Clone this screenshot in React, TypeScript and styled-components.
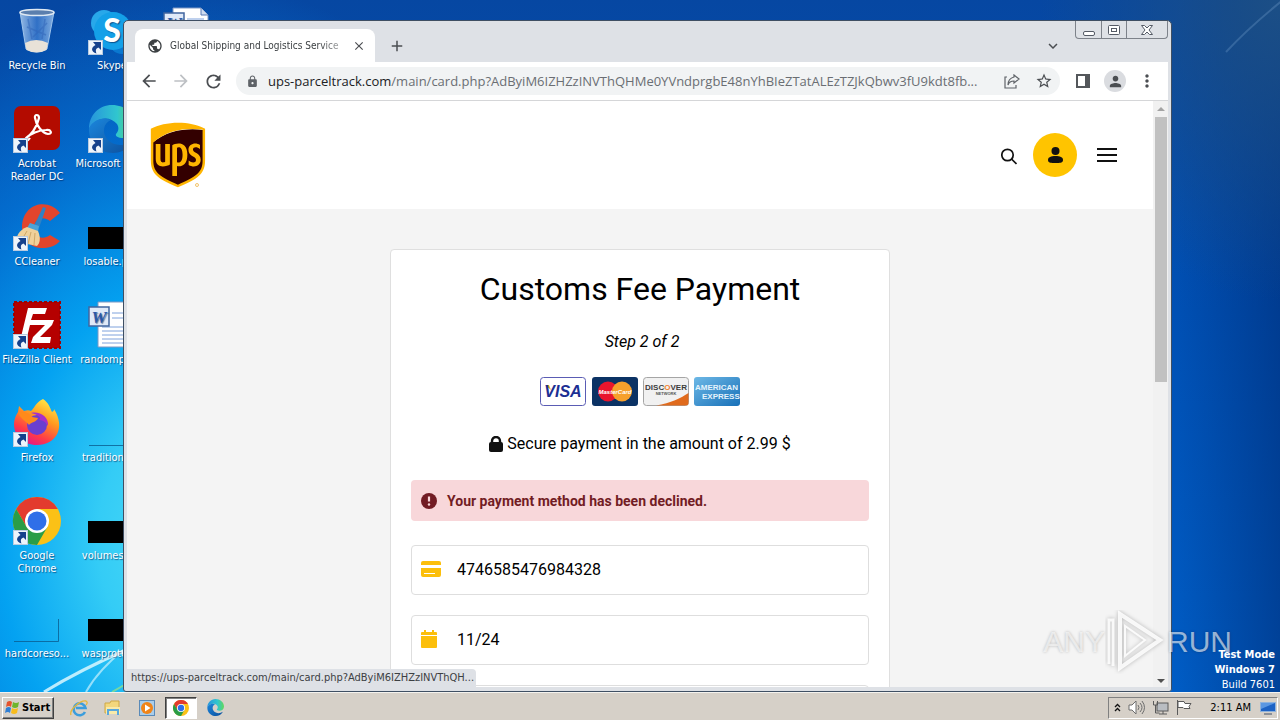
import React from "react";
import styled, { createGlobalStyle, css } from "styled-components";
import {
  MdAdd, MdArrowBack, MdArrowForward, MdClose, MdLock, MdMoreVert, MdPerson,
  MdPublic, MdRefresh, MdStarBorder, MdKeyboardArrowDown,
} from "react-icons/md";
import { FaUps } from "react-icons/fa";

const uiFont = '"DejaVu Sans Condensed", "DejaVu Sans", sans-serif';
const webFont = 'Roboto, "Liberation Sans", sans-serif';

const Global = createGlobalStyle`
  * { box-sizing: border-box; }
  body { margin: 0; overflow: hidden; font-family: ${uiFont}; }
  button { margin: 0; padding: 0; border: 0; background: none; font: inherit; color: inherit; }
`;

/* ---------- Desktop ---------- */

const Screen = styled.div`
  display: flex;
  flex-direction: column;
  height: 100vh;
`;

const Desktop = styled.main`
  position: relative;
  flex: 1;
  min-height: 0;
  overflow: hidden;
  background:
    radial-gradient(ellipse 420px 560px at 190px 540px, #4fdcf6 0%, #34ccf6 22%, rgba(4, 166, 244, 0.95) 45%, rgba(4, 130, 228, 0.6) 72%, rgba(4, 110, 215, 0) 100%),
    radial-gradient(ellipse 240px 300px at 100% 0, #1c4f86 0%, rgba(22, 76, 134, 0) 100%),
    linear-gradient(90deg, rgba(0, 30, 90, 0) 92%, rgba(0, 40, 110, 0.5) 100%),
    linear-gradient(180deg, #0647a2 0%, #0050b4 45%, #005cc4 100%);
`;

const Rays = styled.svg`
  position: absolute;
  width: 140px;
  height: 110px;
  left: 0;
  bottom: 0;
`;

const CornerRays = styled(Rays)`
  left: auto;
  bottom: auto;
  right: 0;
  top: 0;
`;

const IconGrid = styled.div`
  position: relative;
  display: grid;
  grid-auto-flow: column;
  grid-template-rows: repeat(7, 98px);
  grid-auto-columns: 74px;
  column-gap: 1px;
`;

const DesktopItem = styled.button`
  display: flex;
  flex-direction: column;
  align-items: center;
  justify-content: flex-start;
  gap: 4px;
  padding-top: 7px;
  color: #fff;
  font-size: 11px;
  line-height: 13px;
  white-space: pre;
  text-shadow: 1px 1px 1px rgba(0, 30, 80, 0.6);
  svg { display: block; overflow: visible; }
`;

const BuildInfo = styled.div`
  position: absolute;
  right: 5px;
  bottom: 0;
  color: #fff;
  font-size: 11px;
  line-height: 15px;
  text-align: right;
`;

const Watermark = styled.div`
  position: absolute;
  right: 48px;
  bottom: 18px;
  display: flex;
  align-items: center;
  pointer-events: none;
  color: rgba(255, 255, 255, 0.6);
  font-family: "Liberation Sans", sans-serif;
  font-size: 30px;
  line-height: 64px;
  text-shadow: 0 0 3px rgba(0, 0, 0, 0.25);
`;

/* ---------- Browser window ---------- */

const Window = styled.section`
  position: absolute;
  left: 123px;
  right: 108px;
  top: 20px;
  bottom: 0;
  display: flex;
  flex-direction: column;
  padding: 0 3px 4px;
  border: 1px solid #3f4f63;
  border-radius: 5px 5px 3px 3px;
  background: #dee1e6;
`;

const TabStrip = styled.div`
  display: flex;
  align-items: flex-end;
  height: 41px;
  padding-left: 8px;
  color: #3c4043;
`;

const Tab = styled.div`
  display: flex;
  align-items: center;
  width: 240px;
  height: 33px;
  padding: 0 8px 0 12px;
  border-radius: 8px 8px 0 0;
  background: #fff;
  font-size: 10px;
`;

const TabTitle = styled.span`
  flex: 1;
  margin: 0 6px 0 7px;
  overflow: hidden;
  white-space: nowrap;
  mask-image: linear-gradient(90deg, #000 85%, rgba(0, 0, 0, 0.3));
`;

const IconButton = styled.button<{ $w?: number; $dim?: boolean }>`
  display: flex;
  align-items: center;
  justify-content: center;
  flex: none;
  width: ${(p) => p.$w ?? 32}px;
  height: 32px;
  color: ${(p) => (p.$dim ? "#bdc0c4" : "#4b4e52")};
`;

const Spacer = styled.div`
  flex: 1;
`;

const WindowControls = styled.div`
  display: flex;
  align-self: flex-start;
  margin-left: 6px;
  border: 1px solid #7d828a;
  border-top: 0;
  border-radius: 0 0 4px 4px;
`;

const ControlButton = styled.button<{ $w: number }>`
  display: flex;
  align-items: center;
  justify-content: center;
  width: ${(p) => p.$w}px;
  height: 17px;
  & + & { border-left: 1px solid #7d828a; }
`;

const Toolbar = styled.div`
  display: flex;
  align-items: center;
  height: 39px;
  padding: 0 5px 0 6px;
  border-bottom: 1px solid #d5d6d8;
  background: #fff;
`;

const AddressBar = styled.div`
  display: flex;
  flex: 1;
  align-items: center;
  min-width: 0;
  height: 28px;
  margin: 0 7px;
  padding-left: 10px;
  border-radius: 14px;
  background: #f1f3f4;
  color: #5f6368;
`;

const Url = styled.span`
  flex: 1;
  min-width: 0;
  margin-left: 9px;
  overflow: hidden;
  color: #6a6e73;
  font-family: "Open Sans", "Noto Sans", sans-serif;
  font-size: 13px;
  white-space: nowrap;
  b { color: #202124; font-weight: 400; }
`;

const Avatar = styled.span`
  display: flex;
  align-items: center;
  justify-content: center;
  width: 22px;
  height: 22px;
  border-radius: 50%;
  background: #dadce0;
`;

const Viewport = styled.div`
  position: relative;
  display: flex;
  flex: 1;
  min-height: 0;
  overflow: hidden;
  background: #f4f4f4;
`;

const StatusBubble = styled.div`
  position: absolute;
  left: 0;
  bottom: 0;
  padding: 0 2px 0 4px;
  border-radius: 0 4px 0 0;
  background: #dee1e6;
  color: #3c4043;
  font-size: 11px;
  line-height: 18px;
`;

const ScrollTrack = styled.div`
  display: flex;
  flex-direction: column;
  align-items: center;
  width: 15px;
  padding: 6px 0 4px;
  gap: 6px;
  background: #f1f1f1;
`;

const ScrollThumb = styled.div`
  width: 12px;
  height: 46%;
  background: #c1c1c1;
`;

/* ---------- Web page ---------- */

const Page = styled.div`
  flex: 1;
  color: #000;
  font-family: ${webFont};
  font-size: 16px;
`;

const PageHeader = styled.header`
  display: flex;
  align-items: center;
  height: 108px;
  padding: 0 36px 0 23px;
  background: #fff;
`;

const HeaderButton = styled.button`
  display: flex;
  align-items: center;
  justify-content: center;
  margin-left: 16px;
  & + & + & { margin-left: 20px; }
`;

const AccountButton = styled(HeaderButton)`
  width: 44px;
  height: 44px;
  border-radius: 50%;
  background: #ffc400;
`;

const Card = styled.div`
  display: flex;
  flex-direction: column;
  max-width: 500px;
  margin: 40px auto;
  padding: 20px;
  border: 1px solid #dfdfdf;
  border-radius: 4px;
  background: #fff;
`;

const Title = styled.h1`
  margin: 0;
  font-size: 32px;
  font-weight: 400;
  line-height: 38px;
  text-align: center;
`;

const Step = styled.p`
  margin: 24px 0 25px;
  padding-left: 4px;
  font-style: italic;
  line-height: 20px;
  text-align: center;
`;

const CardLogos = styled.div`
  display: flex;
  justify-content: center;
  gap: 5px;
  svg { display: block; }
`;

const Secure = styled.p`
  display: flex;
  align-items: center;
  justify-content: center;
  gap: 4px;
  margin: 26px 0 25px;
  line-height: 22px;
`;

const Alert = styled.div`
  display: flex;
  align-items: center;
  gap: 10px;
  height: 41px;
  margin-bottom: 24px;
  padding: 0 10px;
  border-radius: 4px;
  background: #f8d7da;
  color: #721c24;
  font-size: 14px;
  font-weight: 700;
`;

const Field = styled.label`
  display: flex;
  align-items: center;
  height: 50px;
  margin-bottom: 20px;
  padding: 0 9px 2px;
  border: 1px solid #dedede;
  border-radius: 4px;
`;

const FieldIcon = styled.span`
  display: flex;
  width: 36px;
`;

const FieldInput = styled.input`
  flex: 1;
  min-width: 0;
  padding: 0;
  border: 0;
  outline: 0;
  background: none;
  color: #000;
  font-family: ${webFont};
  font-size: 16px;
`;

/* ---------- Taskbar ---------- */

const Taskbar = styled.footer`
  display: flex;
  align-items: center;
  height: 28px;
  padding: 2px 2px 0;
  border-top: 1px solid #f4f2ee;
  background: #d6d0c8;
`;

const bevel = css`
  border: 1px solid;
  border-color: #fff #404040 #404040 #fff;
  box-shadow: inset -1px -1px #808080;
`;

const StartButton = styled.button`
  display: flex;
  align-items: center;
  gap: 2px;
  width: 52px;
  height: 22px;
  margin-right: 8px;
  padding-left: 2px;
  font-size: 11px;
  font-weight: 700;
  ${bevel}
`;

const TaskButton = styled.button<{ $active?: boolean }>`
  display: flex;
  align-items: center;
  justify-content: center;
  width: 32px;
  height: 22px;
  margin: 0 1px;
  ${(p) => p.$active && css`
    background: #fff;
    border: 1px solid;
    border-color: #404040 #fff #fff #404040;
    box-shadow: inset 1px 1px #808080;
  `}
`;

const Tray = styled.div`
  display: flex;
  align-items: center;
  gap: 7px;
  height: 22px;
  padding: 0 1px 0 5px;
  border: 1px solid;
  border-color: #808080 #fff #fff #808080;
  svg { display: block; }
`;

const Clock = styled.time`
  margin: 0 2px 0 10px;
  font-size: 11px;
`;

/* ---------- Drawings ---------- */

const Shortcut = () => (
  <g transform="translate(0 33)">
    <rect x=".5" y=".5" width="14" height="14" fill="#eef4fb" stroke="#b9cbe0" />
    <path d="M5 2h8v8l-2.500-2.500c-3 1-3 3-2 6-6-2-5.500-6-1-8.500z" fill="#16418c" />
  </g>
);

const BinIcon = () => (
  <svg width="48" height="48" viewBox="0 0 48 48">
    <defs>
      <linearGradient id="bin" x1="0" x2="1">
        <stop offset="0" stopColor="#c9e2fa" stopOpacity=".75" />
        <stop offset=".5" stopColor="#4d8bdc" stopOpacity=".6" />
        <stop offset="1" stopColor="#b8d8f8" stopOpacity=".7" />
      </linearGradient>
    </defs>
    <path d="M7 5l6 37q11 6 21 0l7-37z" fill="url(#bin)" stroke="#9cc3ec" />
    <path d="M12 36q11-6 23 0l-1.500 7q-10 5-20 0z" fill="#e8e2d8" />
    <path d="M15 12l4 20M32 12l-3 20M14 20l19 8M34 16L20 30" stroke="#2f63b8" strokeWidth="1.500" opacity=".5" fill="none" />
    <ellipse cx="24" cy="5.500" rx="17" ry="3" fill="#5b7fae" stroke="#dfe9f3" strokeWidth="1.500" />
  </svg>
);

const SkypeIcon = () => (
  <svg width="48" height="48" viewBox="0 0 48 48">
    <circle cx="16" cy="16" r="13" fill="#28a8ea" />
    <circle cx="34" cy="34" r="13" fill="#0a78d0" />
    <circle cx="25" cy="24" r="19" fill="#14a0e8" />
    <text x="24" y="35" fontSize="32" fontWeight="900" fill="#fff" textAnchor="middle" fontFamily="Lato, sans-serif">S</text>
    <Shortcut />
  </svg>
);

const AcrobatIcon = () => (
  <svg width="48" height="48" viewBox="0 0 48 48">
    <rect x="1" y="1" width="46" height="44" rx="7" fill="#b30b00" />
    <path d="M13 33c4-2 11-10 13-20 0-4-5-4-4 0 1 7 7 15 13 16 5 0 3-5-2-4-7 0-16 4-20 8-2 4 2 3 4 0" fill="none" stroke="#fff" strokeWidth="2.200" />
    <Shortcut />
  </svg>
);

const EdgeMark = ({ size }: { size: number }) => (
  <svg width={size} height={size} viewBox="0 0 48 48">
    <defs>
      <linearGradient id="edgeTop" x1="0" x2="1">
        <stop offset="0" stopColor="#2794dc" />
        <stop offset=".6" stopColor="#30c6cf" />
        <stop offset="1" stopColor="#62d85a" />
      </linearGradient>
      <linearGradient id="edgeLow" x1="0" y1="0" x2="1" y2="1">
        <stop offset="0" stopColor="#1b86dc" />
        <stop offset="1" stopColor="#0c4f9c" />
      </linearGradient>
    </defs>
    <path d="M1 24C1 10 11 0 24 0s24 9 24 21c0 8-6 12-13 12-5 0-8-2-7-4 3-3 3-7 1-10C22 10 7 12 1 24z" fill="url(#edgeTop)" />
    <path d="M1 23c4-8 14-12 22-8-8 3-9 13-4 19 6 7 17 8 26 2-4 8-12 12-20 12C11 48 0 37 1 23z" fill="url(#edgeLow)" />
  </svg>
);

const EdgeIcon = () => (
  <svg width="48" height="48" viewBox="0 0 48 48">
    <EdgeMark size={48} />
    <Shortcut />
  </svg>
);

const CCleanerIcon = () => (
  <svg width="48" height="48" viewBox="0 0 48 48">
    <path d="M47 10l-10 8c-8-6-16-1-16 7s8 13 16 7l10 6C38 49 10 49 9 25 9-1 36-5 47 10z" fill="#e2452c" />
    <path d="M30 4l3 1-7 20-5-2z" fill="#2f82c4" />
    <path d="M17 20l9 3-1 6-11-4z" fill="#4aa3d8" />
    <path d="M14 24l11 4c3 7 2 12-1 15L5 39C2 34 6 27 14 24z" fill="#f0d19a" />
    <path d="M14 28l-6 10M18 29l-3 12M22 30l-1 12" stroke="#cfa766" />
    <Shortcut />
  </svg>
);

const FileZillaIcon = () => (
  <svg width="48" height="48" viewBox="0 0 48 48">
    <rect x="1" y="1" width="46" height="46" fill="#b50000" stroke="#a00000" strokeWidth="2" strokeDasharray="3 2" />
    <path d="M15 7h19l-2 6H20l-2 6h10l-1 5H17l-3 12H8z" fill="#fff" />
    <path d="M25 19h16l-2 5-12 12h11l-1 6H18l2-6 12-12h-9z" fill="#fff" />
    <Shortcut />
  </svg>
);

const DocIcon = () => (
  <svg width="48" height="48" viewBox="0 0 48 48">
    <path d="M10 1h28l7 7v38H10z" fill="#fff" stroke="#7c98c4" />
    <path d="M38 1v7h7" fill="#cfdcf0" stroke="#5a7bb4" />
    <path d="M24 12h17M24 17h17M14 26h28M14 30h28M14 34h28M14 38h28M14 42h28" stroke="#7ea2dc" />
    <rect x="1" y="6" width="20" height="19" fill="#dfe9f8" stroke="#41659f" strokeWidth="1.500" />
    <text x="11" y="22" fontSize="17" fontWeight="700" fontStyle="italic" fill="#2a58a8" textAnchor="middle" fontFamily="Liberation Serif, serif">W</text>
  </svg>
);

const FirefoxIcon = () => (
  <svg width="48" height="48" viewBox="0 0 48 48">
    <defs>
      <linearGradient id="fox" x1=".8" y1="0" x2=".3" y2="1">
        <stop offset="0" stopColor="#fff04a" />
        <stop offset=".4" stopColor="#ff9a1f" />
        <stop offset=".75" stopColor="#ff3b47" />
        <stop offset="1" stopColor="#e3148c" />
      </linearGradient>
    </defs>
    <path d="M30 0c6 4 7 9 9 13 2-1 2-2 2-3 12 19 2 36-17 36C10 46 1 37 1 25c0-5 2-9 4-12l1-6 5 5c3-1 5-1 7 0 3-2 4-8 12-12z" fill="url(#fox)" />
    <circle cx="24" cy="26" r="10" fill="#6a3fd0" />
    <path d="M18 14c9-2 18 4 17 13-2-4-5-6-9-6 4-3-4-6-8-7z" fill="#a82fc8" />
    <path d="M5 14c5-3 11 0 14 4l6 1c-1 4-7 4-9 7-2-3-8-6-11-12z" fill="#ff8a1a" />
    <Shortcut />
  </svg>
);

const ChromeMark = ({ size }: { size: number }) => (
  <svg width={size} height={size} viewBox="0 0 48 48">
    <circle cx="24" cy="24" r="24" fill="#fbc116" />
    <path d="M24 12h20.800A24 24 0 0 0 3.200 12l10.400 18z" fill="#e33b2e" />
    <path d="M3.200 12A24 24 0 0 0 24 48l10.400-18-20.800 0z" fill="#2a9d47" />
    <circle cx="24" cy="24" r="12" fill="#fff" />
    <circle cx="24" cy="24" r="9.500" fill="#2f6fe8" />
  </svg>
);

const ChromeIcon = () => (
  <svg width="48" height="48" viewBox="0 0 48 48">
    <ChromeMark size={48} />
    <Shortcut />
  </svg>
);

const BlackThumb = () => (
  <svg width="48" height="48" viewBox="0 0 48 48">
    <rect y="24" width="46" height="22" fill="#000" />
  </svg>
);

const ClearThumb = () => (
  <svg width="48" height="48" viewBox="0 0 48 48">
    <path d="M1 46.500h44.500V24" fill="none" stroke="#0a5c90" opacity=".8" />
  </svg>
);

const WindowsFlag = () => (
  <svg width="15" height="15" viewBox="0 0 15 15">
    <path d="M2 2q3-2 5 0L6 7Q4 5 1 7z" fill="#e5532c" />
    <path d="M8 2q3 2 6 0l-1 5q-3 2-6 0z" fill="#6fb52c" />
    <path d="M1 8q3-2 5 0l-1 5q-2-2-5 0z" fill="#2f7fd4" />
    <path d="M7 8q3 2 6 0l-1 5q-3 2-6 0z" fill="#f8bc1c" />
  </svg>
);

const IeIcon = () => (
  <svg width="18" height="18" viewBox="0 0 18 18">
    <path d="M15 12a6 6 0 1 1 .5-4H6" transform="translate(0 1)" fill="none" stroke="#3b9ddc" strokeWidth="2.600" />
    <path d="M1 16C-1 11 10 1 16 2c2 1 1 3 0 4" fill="none" stroke="#e6b73a" strokeWidth="1.300" />
  </svg>
);

const FolderIcon = () => (
  <svg width="18" height="18" viewBox="0 0 18 18">
    <path d="M1 4h5l1-2h8v12H1z" fill="#f3d77c" stroke="#cfa946" />
    <path d="M2 8h14v7H2z" fill="#f9eaa9" />
    <path d="M4 16v-5h10v5" fill="none" stroke="#5aa8dc" strokeWidth="2" />
  </svg>
);

const PlayerIcon = () => (
  <svg width="16" height="16" viewBox="0 0 16 16">
    <rect x=".5" y=".5" width="15" height="15" fill="#a9cdea" stroke="#5a8ab8" />
    <circle cx="8" cy="8" r="6" fill="#f08418" />
    <path d="M6 4.500L11.500 8 6 11.500z" fill="#fff" />
  </svg>
);

const UpsLogo = () => (
  <svg width="56" height="68" viewBox="0 0 56 68" role="img" aria-label="UPS">
    <path d="M2 22C18 9 36 7 54 9v31c0 13-8 18-26 25C10 58 2 53 2 40z" fill="#330000" />
    <FaUps x="-9" y="-3" size={74} color="#ffb500" />
    <circle cx="47" cy="64" r="1.500" fill="none" stroke="#f3c46a" />
  </svg>
);

const cardText = { fontFamily: "Liberation Sans, sans-serif", fontWeight: 700 };

const PaymentLogos = () => (
  <CardLogos>
    <svg width="46" height="30" viewBox="0 0 46 30">
      <rect x=".5" y=".5" width="45" height="28" rx="3" fill="#fff" stroke="#5a5cb4" />
      <path d="M5 8h4l2 5z" fill="#f2ae2e" />
      <text x="23" y="20" fontSize="16" fontStyle="italic" textAnchor="middle" fill="#1c2f93" {...cardText}>VISA</text>
    </svg>
    <svg width="47" height="30" viewBox="0 0 47 30">
      <rect x="1" width="46" height="29" rx="3" fill="#0b3264" />
      <circle cx="17" cy="14.500" r="10" fill="#e8152c" />
      <circle cx="31" cy="14.500" r="10" fill="#f6a02c" />
      <text x="24" y="17" fontSize="6" fontStyle="italic" textAnchor="middle" fill="#fff" {...cardText}>MasterCard</text>
    </svg>
    <svg width="46" height="30" viewBox="0 0 46 30">
      <rect x=".5" y=".5" width="45" height="28" rx="3" fill="#f1f1f1" stroke="#a5a5a5" />
      <path d="M13 28.500C28 26 38 21 45.500 16v10q0 2.500-3 2.500z" fill="#e06a1c" />
      <text x="23" y="13" fontSize="8" textAnchor="middle" fill="#3c3c3c" {...cardText}>DISC<tspan fill="#f08030">O</tspan>VER</text>
      <text x="23" y="18" fontSize="4" textAnchor="middle" fill="#555" {...cardText}>NETWORK</text>
    </svg>
    <svg width="46" height="30" viewBox="0 0 46 30">
      <defs>
        <linearGradient id="amex" x1="0" y1="0" x2="1" y2="1">
          <stop offset="0" stopColor="#6db8e6" />
          <stop offset="1" stopColor="#1870b8" />
        </linearGradient>
      </defs>
      <rect width="46" height="29" rx="3" fill="url(#amex)" />
      <text x="1" y="13" fontSize="8" fill="#e4f3fc" {...cardText}>AMERICAN</text>
      <text x="8" y="22" fontSize="8" fill="#e4f3fc" {...cardText}>EXPRESS</text>
    </svg>
  </CardLogos>
);

const desktopItems: { label: string; icon: React.ReactNode }[] = [
  { label: "Recycle Bin", icon: <BinIcon /> },
  { label: "Acrobat\nReader DC", icon: <AcrobatIcon /> },
  { label: "CCleaner", icon: <CCleanerIcon /> },
  { label: "FileZilla Client", icon: <FileZillaIcon /> },
  { label: "Firefox", icon: <FirefoxIcon /> },
  { label: "Google\nChrome", icon: <ChromeIcon /> },
  { label: "hardcoreso...", icon: <ClearThumb /> },
  { label: "Skype", icon: <SkypeIcon /> },
  { label: "Microsoft Edge", icon: <EdgeIcon /> },
  { label: "losable.png", icon: <BlackThumb /> },
  { label: "randompur...", icon: <DocIcon /> },
  { label: "traditional...", icon: <ClearThumb /> },
  { label: "volumeser...", icon: <BlackThumb /> },
  { label: "wasprotea...", icon: <BlackThumb /> },
  { label: "", icon: <DocIcon /> },
];

const Browser = () => (
  <Window aria-label="Browser">
    <TabStrip>
      <Tab>
        <MdPublic size={16} />
        <TabTitle>Global Shipping and Logistics Service</TabTitle>
        <IconButton $w={16} aria-label="Close tab"><MdClose size={14} stroke="currentColor" /></IconButton>
      </Tab>
      <IconButton $w={44} aria-label="New tab"><MdAdd size={18} stroke="currentColor" /></IconButton>
      <Spacer />
      <IconButton aria-label="Search tabs"><MdKeyboardArrowDown size={18} stroke="currentColor" /></IconButton>
      <WindowControls>
        <ControlButton $w={25} aria-label="Minimize">
          <svg width="12" height="12" viewBox="0 0 12 12"><rect x=".5" y="7.500" width="11" height="4" rx="1.500" fill="#fff" stroke="#555b66" /></svg>
        </ControlButton>
        <ControlButton $w={25} aria-label="Maximize">
          <svg width="12" height="10" viewBox="0 0 12 10"><rect x=".5" y=".5" width="11" height="9" rx="1" fill="#fff" stroke="#555b66" /><rect x="3.500" y="3.500" width="5" height="3" fill="#fff" stroke="#555b66" /></svg>
        </ControlButton>
        <ControlButton $w={41} aria-label="Close">
          <svg width="12" height="10" viewBox="0 0 12 10"><path d="M.5.500h3L6 3 8.500.500h3L8 5l3.500 4.500h-3L6 7 3.500 9.500h-3L4 5z" fill="#fff" stroke="#555b66" /></svg>
        </ControlButton>
      </WindowControls>
    </TabStrip>
    <Toolbar>
      <IconButton aria-label="Back"><MdArrowBack size={20} /></IconButton>
      <IconButton $dim aria-label="Forward"><MdArrowForward size={20} /></IconButton>
      <IconButton aria-label="Reload"><MdRefresh size={21} /></IconButton>
      <AddressBar>
        <MdLock size={13} />
        <Url><b>ups-parceltrack.com</b>/main/card.php?AdByiM6IZHZzINVThQHMe0YVndprgbE48nYhBIeZTatALEzTZJkQbwv3fU9kdt8fb...</Url>
        <IconButton aria-label="Share">
          <svg width="16" height="15" viewBox="0 0 16 15" fill="none" stroke="#5f6368" strokeWidth="1.200">
            <path d="M3 3H1v11h11v-3" />
            <path d="M10 1l5 4-5 4V7C7 7 5 8 4 11c0-4 2-7 6-8z" />
          </svg>
        </IconButton>
        <IconButton aria-label="Bookmark"><MdStarBorder size={18} /></IconButton>
      </AddressBar>
      <IconButton aria-label="Side panel">
        <svg width="14" height="14" viewBox="0 0 14 14"><rect x="1" y="1" width="12" height="12" fill="none" stroke="#54575b" strokeWidth="2" /><path d="M9 1h4v12H9z" fill="#54575b" /></svg>
      </IconButton>
      <IconButton aria-label="Profile"><Avatar><MdPerson size={17} /></Avatar></IconButton>
      <IconButton aria-label="Menu"><MdMoreVert size={20} /></IconButton>
    </Toolbar>
    <Viewport>
      <Page>
        <PageHeader>
          <UpsLogo />
          <Spacer />
          <HeaderButton aria-label="Search">
            <svg width="16" height="20" viewBox="0 0 16 20" fill="none" stroke="#111" strokeWidth="1.700"><circle cx="6.500" cy="10" r="5.700" /><path d="M10.500 14l5 5" /></svg>
          </HeaderButton>
          <AccountButton aria-label="Account">
            <svg width="15" height="16" viewBox="0 0 15 16" fill="#111"><circle cx="7.500" cy="4" r="4" /><path d="M0 13c0-3 3-4 7.500-4s7.500 1 7.500 4-3 3-7.500 3S0 16 0 13z" /></svg>
          </AccountButton>
          <HeaderButton aria-label="Menu">
            <svg width="20" height="14" viewBox="0 0 20 14" stroke="#111" strokeWidth="2"><path d="M0 1h20M0 7h20M0 13h20" /></svg>
          </HeaderButton>
        </PageHeader>
        <Card>
          <Title>Customs Fee Payment</Title>
          <Step>Step 2 of 2</Step>
          <PaymentLogos />
          <Secure>
            <svg width="14" height="16" viewBox="0 0 14 16"><rect y="6" width="14" height="10" rx="2" fill="#111" /><path d="M3 8V5a4 4 0 0 1 8 0v3" fill="none" stroke="#111" strokeWidth="2.400" /></svg>
            Secure payment in the amount of 2.99 $
          </Secure>
          <Alert role="alert">
            <svg width="16" height="16" viewBox="0 0 16 16"><circle cx="8" cy="8" r="8" fill="#721c24" /><path d="M8 3.500v5" stroke="#f8d7da" strokeWidth="2.200" /><circle cx="8" cy="11.500" r="1.200" fill="#f8d7da" /></svg>
            Your payment method has been declined.
          </Alert>
          <Field>
            <FieldIcon>
              <svg width="20" height="16" viewBox="0 0 20 16" fill="#fcbf0b"><path d="M2 0h16q2 0 2 2v2H0V2q0-2 2-2z" /><path fillRule="evenodd" d="M0 7h20v7q0 2-2 2H2q-2 0-2-2zm3 5v1h11v-1z" /></svg>
            </FieldIcon>
            <FieldInput aria-label="Card number" readOnly value="4746585476984328" />
          </Field>
          <Field>
            <FieldIcon>
              <svg width="16" height="18" viewBox="0 0 16 18" fill="#fcbf0b"><path d="M3 0h2v2h6V0h2v2h2q1 0 1 1v2H0V3q0-1 1-1h2z" /><path d="M0 6h16v11q0 1-1 1H1q-1 0-1-1z" /></svg>
            </FieldIcon>
            <FieldInput aria-label="Expiry date" readOnly value="11/24" />
          </Field>
          <Field>
            <FieldInput aria-label="Security code" readOnly value="" />
          </Field>
        </Card>
      </Page>
      <ScrollTrack>
        <svg width="8" height="4" viewBox="0 0 8 4"><path d="M0 4l4-4 4 4z" fill="#a3a3a3" /></svg>
        <ScrollThumb />
        <Spacer />
        <svg width="8" height="4" viewBox="0 0 8 4"><path d="M0 0l4 4 4-4z" fill="#505050" /></svg>
      </ScrollTrack>
      <StatusBubble>https://ups-parceltrack.com/main/card.php?AdByiM6IZHZzINVThQH...</StatusBubble>
    </Viewport>
  </Window>
);

export default function App() {
  return (
    <Screen>
      <Global />
      <Desktop>
        <Rays viewBox="0 0 140 110" fill="none" stroke="#e6fbff">
          <path d="M44 110Q80 88 126 68" strokeWidth="3" opacity=".8" />
          <path d="M86 110Q98 88 126 66" strokeWidth="2" opacity=".6" />
          <path d="M112 110l14-8" stroke="#8ce08c" strokeWidth="2" opacity=".8" />
        </Rays>
        <CornerRays viewBox="0 0 140 110" fill="none" stroke="#8fb8e0">
          <path d="M148 0Q110 30 86 56" transform="translate(0 -4)" strokeWidth="2" opacity=".25" />
        </CornerRays>
        <IconGrid>
          {desktopItems.map((item, i) => (
            <DesktopItem key={i}>
              {item.icon}
              {item.label}
            </DesktopItem>
          ))}
        </IconGrid>
        <Browser />
        <Watermark>
          ANY
          <svg width="62" height="64" viewBox="0 0 62 64" fill="none" stroke="rgba(255,255,255,.85)" strokeWidth="4">
            <g style={{ filter: "drop-shadow(0 0 2px rgba(0,0,0,.3))" }}>
              <path d="M4 54V10h4v46" strokeWidth="3" />
              <path d="M15 4v54l40-28z" />
              <path d="M20 16v30l20-16z" strokeWidth="2" />
            </g>
          </svg>
          RUN
        </Watermark>
        <BuildInfo>
          <strong>Test Mode</strong><br />
          <strong>Windows 7</strong><br />
          Build 7601
        </BuildInfo>
      </Desktop>
      <Taskbar>
        <StartButton><WindowsFlag />Start</StartButton>
        <TaskButton aria-label="Internet Explorer"><IeIcon /></TaskButton>
        <TaskButton aria-label="Explorer"><FolderIcon /></TaskButton>
        <TaskButton aria-label="Media Player"><PlayerIcon /></TaskButton>
        <TaskButton $active aria-label="Chrome"><ChromeMark size={16} /></TaskButton>
        <TaskButton aria-label="Edge"><EdgeMark size={17} /></TaskButton>
        <Spacer />
        <Tray>
          <svg width="7" height="9" viewBox="0 0 7 9" fill="none" stroke="#111" strokeWidth="1.300"><path d="M1 4l2.500-2.500L6 4M1 8l2.500-2.500L6 8" /></svg>
          <svg width="17" height="15" viewBox="0 0 17 15" fill="none" stroke="#6d6d6d"><path d="M1 5h3l4-4v13l-4-4H1z" fill="#fff" /><path d="M10 5q2 2.500 0 5M12 3q4 4.500 0 9M14 1q5 6.500 0 13" /></svg>
          <svg width="17" height="15" viewBox="0 0 17 15" fill="#fff" stroke="#5a5a5a"><rect x="5" y="3" width="11" height="8" fill="#b9bdc2" /><path d="M7 14h8M11 11v3M1.500 1v4h4V1M3.500 5v8h4" fill="none" /></svg>
          <svg width="17" height="15" viewBox="0 0 17 15" fill="#fff" stroke="#5a5a5a"><path d="M1.500 0v15M2 1.500h6l1 2h6l-2 3 1 2H8l-1-1H2z" /></svg>
          <Clock>2:11 AM</Clock>
          <svg width="16" height="14" viewBox="0 0 16 14"><rect x=".5" y="1.500" width="15" height="9" fill="#1d62c4" stroke="#8fb2dc" /><path d="M1 2h14l-14 6z" fill="#5b97e2" /><path d="M4 13h8" stroke="#8a8f98" strokeWidth="2" /></svg>
        </Tray>
      </Taskbar>
    </Screen>
  );
}
